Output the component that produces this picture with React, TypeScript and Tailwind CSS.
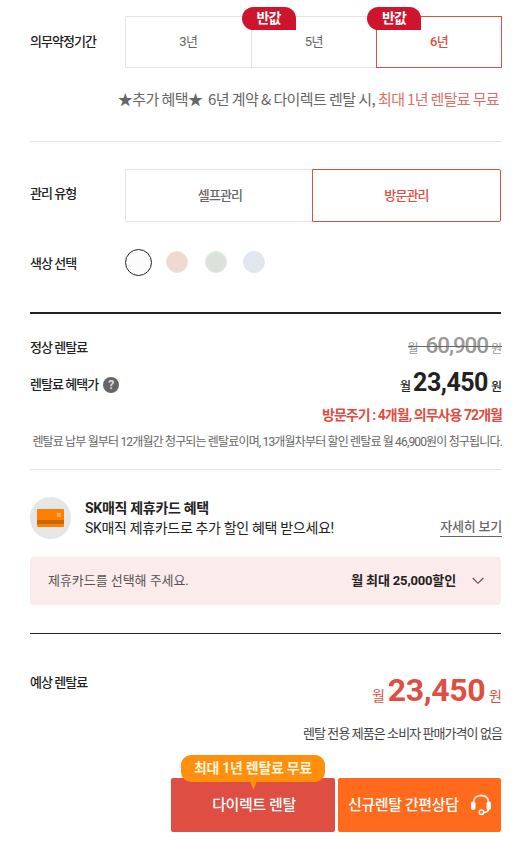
import type { ReactNode } from "react"

const PERIODS = [
  { title: "3년", half: false, selected: false },
  { title: "5년", half: true, selected: false },
  { title: "6년", half: true, selected: true },
]

const COLORS = ["bg-[#efd9d1]", "bg-[#dae3d9]", "bg-[#e0e7f0]"]

function Label({ children }: { children: ReactNode }) {
  return (
    <p className="w-[95px] shrink-0 text-[13px] font-medium tracking-[-0.95px] text-[#222]">
      {children}
    </p>
  )
}

function HalfBadge() {
  return (
    <span className="absolute -left-[10px] -top-[10px] z-10 flex h-[23px] w-[54px] items-center justify-center rounded-l-full rounded-tr-full bg-[#cf152d] text-[14px] font-bold tracking-[-0.8px] text-white">
      반값
    </span>
  )
}

function Options() {
  return (
    <>
      <section className="flex h-[52px] items-center">
        <Label>의무약정기간</Label>
        <div className="flex h-[52px] w-[377px] shrink-0 text-[13px] tracking-[-0.6px]">
          {PERIODS.map((period) => (
            <button
              key={period.title}
              className={
                period.selected
                  ? "relative w-[126px] border border-[#de4e42] font-medium text-[#de4e42]"
                  : "relative w-[125.5px] border border-r-0 border-[#e5e5e5] text-[#666] first:rounded-l-[2px]"
              }
            >
              {period.half && <HalfBadge />}
              {period.title}
            </button>
          ))}
        </div>
      </section>

      <p className="mt-[19px] flex h-6 items-center justify-end whitespace-pre pr-[2px] font-['Noto_Sans_CJK_KR',sans-serif] text-[15px] tracking-[-0.57px] text-[#666]">
        ★추가 혜택★  6년 계약 &amp; 다이렉트 렌탈 시,{" "}
        <span className="tracking-[-0.65px] text-[#de6f66]">최대 1년 렌탈료 무료</span>
      </p>

      <hr className="mt-[30px] border-[#e5e5e5]" />

      <section className="mt-[27px] flex h-[53px] items-center">
        <div className="pb-1">
          <Label>관리 유형</Label>
        </div>
        <div className="flex h-[53px] grow text-[13px] font-medium tracking-[-0.87px]">
          <button className="w-[187px] rounded-l-[2px] border border-r-0 border-[#e5e5e5] pl-[2px] text-[#666]">
            셀프관리
          </button>
          <button className="grow rounded-r-[2px] border border-[#de4e42] text-[#de4e42]">
            방문관리
          </button>
        </div>
      </section>

      <section className="mt-[26px] flex h-7 items-center">
        <div className="pt-[3px]">
          <Label>색상 선택</Label>
        </div>
        <span className="mr-[14px] size-[27px] rounded-full border border-[#222] bg-[#fcfcfc]" />
        <div className="flex gap-[16.5px]">
          {COLORS.map((color) => (
            <span
              key={color}
              className={`size-[22px] rounded-full border border-[#e5e5e5] ${color}`}
            />
          ))}
        </div>
      </section>
    </>
  )
}

function Price() {
  return (
    <section>
      <div className="-mr-px flex h-[38px] items-center justify-between">
        <div className="pt-px">
          <Label>정상 렌탈료</Label>
        </div>
        <p className="relative flex items-baseline pb-[2px] text-[12px] text-[#999]">
          <span>월</span>
          <span className="ml-[7px] text-[22.5px] font-medium leading-none tracking-[-1.1px]">
            60,900
          </span>
          <span className="ml-[3px]">원</span>
          <span className="absolute inset-x-0 top-[12px] h-px bg-[#666]" />
        </p>
      </div>
      <div className="-mr-px flex h-[38px] items-center justify-between">
        <div className="flex items-center">
          <p className="text-[13px] font-medium tracking-[-0.95px] text-[#222]">
            렌탈료 혜택가
          </p>
          <span className="ml-[5px] flex size-4 items-center justify-center rounded-full bg-[#666] text-[12px] font-bold text-[#ddd]">
            ?
          </span>
        </div>
        <p className="flex items-baseline pb-[4px] text-[12px] font-medium text-[#222]">
          <span>월</span>
          <span className="ml-[2px] text-[25px] font-bold leading-none tracking-[-0.5px]">
            23,450
          </span>
          <span className="ml-[3px]">원</span>
        </p>
      </div>
      <p className="-mr-px flex h-[22px] items-center justify-end text-[14px] font-bold tracking-[-0.95px] text-[#de4e42]">
        방문주기 : 4개월, 의무사용 72개월
      </p>
      <p className="-mr-px mt-[2px] flex h-[28px] items-center justify-end whitespace-nowrap text-[12px] tracking-[-0.84px] text-[#666]">
        렌탈료 납부 월부터 12개월간 청구되는 렌탈료이며, 13개월차부터 할인 렌탈료 월 46,900원이 청구됩니다.
      </p>
    </section>
  )
}

function CardBenefit() {
  return (
    <section>
      <div className="-mr-px flex h-[42px] items-center">
        <span className="flex h-[42px] w-[41px] items-center justify-center rounded-full bg-[#e6e6e6]">
          <svg width="27" height="18" viewBox="0 0 27 18">
            <rect width="27" height="18" rx="1" fill="#ff7f00" />
            <rect y="11" width="27" height="4" fill="#cc6600" />
            <rect x="20" y="4" width="4" height="4" rx="1" fill="#ffb266" />
          </svg>
        </span>
        <div className="ml-[14px] text-[14px] leading-5 text-[#222]">
          <p className="font-bold tracking-[-0.3px]">SK매직 제휴카드 혜택</p>
          <p className="tracking-[-0.33px]">
            SK매직 제휴카드로 추가 할인 혜택 받으세요!
          </p>
        </div>
        <a
          href="#"
          className="ml-auto mt-[18px] h-[19px] border-b border-[#666] text-[13px] font-medium leading-[18px] tracking-[-0.2px] text-[#666]"
        >
          자세히 보기
        </a>
      </div>
      <button className="mt-[18px] flex h-12 w-full items-center rounded-[4px] bg-[#fcebeb] pl-[18px] pr-[17px]">
        <span className="text-[13px] tracking-[-0.05px] text-[#555]">
          제휴카드를 선택해 주세요.
        </span>
        <span className="ml-auto text-[13px] font-bold tracking-[-0.15px] text-[#222]">
          월 최대 25,000할인
        </span>
        <svg className="ml-4" width="12" height="8" viewBox="0 0 12 8" fill="none">
          <path d="M.7 1 6 6.3 11.3 1" stroke="#555" strokeWidth="1.1" />
        </svg>
      </button>
    </section>
  )
}

function Headset() {
  return (
    <svg width="22" height="22" viewBox="0 0 22 22" fill="none">
      <path d="M3.5 8.5C3.5 4 6.5 1.5 11 1.5S18.500 4 18.500 8.500" stroke="#ffe0cf" strokeWidth="1.800" />
      <rect x="1" y="7.500" width="4.500" height="8.500" rx="2" fill="white" />
      <rect x="16.500" y="7.500" width="4.500" height="8.500" rx="2" fill="white" />
      <path d="M18.500 15.500C18 17.500 16.500 18.400 13.500 18.500" stroke="white" strokeWidth="1.500" />
      <circle cx="11.500" cy="18.300" r="2.200" stroke="white" strokeWidth="1.500" />
    </svg>
  )
}

function Total() {
  return (
    <section>
      <div className="-mr-px flex h-[40px] items-center justify-between">
        <div className="pb-[14px]">
          <Label>예상 렌탈료</Label>
        </div>
        <p className="flex items-baseline text-[14px] text-[#de4e42]">
          <span>월</span>
          <span className="ml-[3px] text-[32px] font-bold leading-none tracking-[-0.4px]">
            23,450
          </span>
          <span className="ml-1">원</span>
        </p>
      </div>
      <p className="-mr-px mt-[14px] flex h-5 items-center justify-end text-[13px] tracking-[-0.93px] text-[#444]">
        렌탈 전용 제품은 소비자 판매가격이 없음
      </p>
      <div className="mt-[34px] flex h-[54px] justify-end gap-[3px] text-[15px] font-medium tracking-[-0.4px] text-white">
        <button className="relative w-[164px] rounded-[2px] bg-[#de4e42] pl-[2px]">
          다이렉트 렌탈
          <span className="absolute -top-[23px] left-[10px] flex h-[27px] w-[144px] items-center justify-center rounded-[10px] bg-[#ff8f0c] text-[14px] font-bold tracking-[-0.3px] text-[#fff6dd]">
            최대 1년 렌탈료 무료
            <svg className="absolute left-[69px] top-[26px]" width="7" height="9" viewBox="0 0 7 9">
              <path d="M0 0h7L3.500 9z" fill="#ff8f0c" />
            </svg>
          </span>
        </button>
        <button className="flex w-[163px] items-center rounded-[2px] bg-[#ff6a1c] pl-[10px]">
          신규렌탈 간편상담
          <span className="ml-auto mr-[9px]">
            <Headset />
          </span>
        </button>
      </div>
    </section>
  )
}

function App() {
  return (
    <main className="h-[844px] w-[530px] overflow-hidden bg-white pl-[30px] pr-[29px] pt-4 font-[Roboto,'Noto_Sans_CJK_KR',sans-serif]">
      <Options />
      <hr className="mb-[14px] mt-[36px] border-t-2 border-[#222]" />
      <Price />
      <hr className="mb-[27px] mt-[13px] border-[#e5e5e5]" />
      <CardBenefit />
      <hr className="mb-[36px] mt-7 border-[#222]" />
      <Total />
    </main>
  )
}

export default App
